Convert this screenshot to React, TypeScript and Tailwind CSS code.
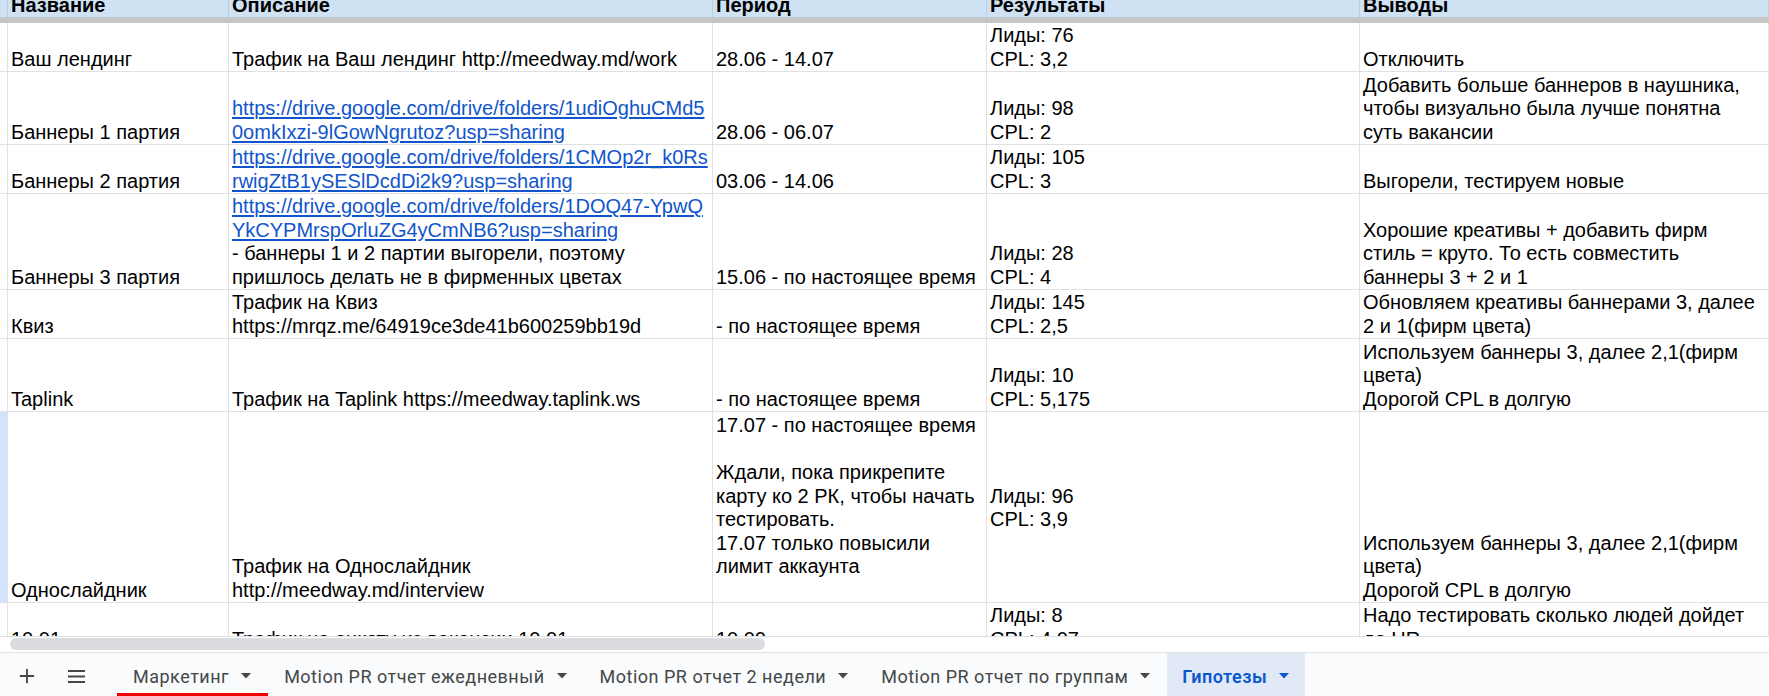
import { Plus } from "lucide-react";

type Line = string | { href: string };

interface RowData {
	h: string;
	mark?: boolean;
	a: Line[];
	b: Line[];
	c: Line[];
	d: Line[];
	e: Line[];
}

const rows: RowData[] = [
	{
		h: "h-[49px]",
		a: ["Ваш лендинг"],
		b: ["Трафик на Ваш лендинг http://meedway.md/work"],
		c: ["28.06 - 14.07"],
		d: ["Лиды: 76", "CPL: 3,2"],
		e: ["Отключить"],
	},
	{
		h: "h-[73px]",
		a: ["Баннеры 1 партия"],
		b: [
			{ href: "https://drive.google.com/drive/folders/1udiOghuCMd5" },
			{ href: "0omkIxzi-9lGowNgrutoz?usp=sharing" },
		],
		c: ["28.06 - 06.07"],
		d: ["Лиды: 98", "CPL: 2"],
		e: [
			"Добавить больше баннеров в наушника,",
			"чтобы визуально была лучше понятна",
			"суть вакансии",
		],
	},
	{
		h: "h-[49px]",
		a: ["Баннеры 2 партия"],
		b: [
			{ href: "https://drive.google.com/drive/folders/1CMOp2r_k0Rs" },
			{ href: "rwigZtB1ySESlDcdDi2k9?usp=sharing" },
		],
		c: ["03.06 - 14.06"],
		d: ["Лиды: 105", "CPL: 3"],
		e: ["Выгорели, тестируем новые"],
	},
	{
		h: "h-[96px]",
		a: ["Баннеры 3 партия"],
		b: [
			{ href: "https://drive.google.com/drive/folders/1DOQ47-YpwQ" },
			{ href: "YkCYPMrspOrluZG4yCmNB6?usp=sharing" },
			"- баннеры 1 и 2 партии выгорели, поэтому",
			"пришлось делать не в фирменных цветах",
		],
		c: ["15.06 - по настоящее время"],
		d: ["Лиды: 28", "CPL: 4"],
		e: [
			"Хорошие креативы + добавить фирм",
			"стиль = круто. То есть совместить",
			"баннеры 3 + 2 и 1",
		],
	},
	{
		h: "h-[49px]",
		a: ["Квиз"],
		b: ["Трафик на Квиз", "https://mrqz.me/64919ce3de41b600259bb19d"],
		c: ["- по настоящее время"],
		d: ["Лиды: 145", "CPL: 2,5"],
		e: ["Обновляем креативы баннерами 3, далее", "2 и 1(фирм цвета)"],
	},
	{
		h: "h-[73px]",
		a: ["Taplink"],
		b: ["Трафик на Taplink https://meedway.taplink.ws"],
		c: ["- по настоящее время"],
		d: ["Лиды: 10", "CPL: 5,175"],
		e: [
			"Используем баннеры 3, далее 2,1(фирм",
			"цвета)",
			"Дорогой CPL в долгую",
		],
	},
	{
		h: "h-[191px]",
		mark: true,
		a: ["Однослайдник"],
		b: ["Трафик на Однослайдник", "http://meedway.md/interview"],
		c: [
			"17.07 - по настоящее время",
			"",
			"Ждали, пока прикрепите",
			"карту ко 2 РК, чтобы начать",
			"тестировать.",
			"17.07 только повысили",
			"лимит аккаунта",
			"",
		],
		d: ["Лиды: 96", "CPL: 3,9", "", "", ""],
		e: [
			"Используем баннеры 3, далее 2,1(фирм",
			"цвета)",
			"Дорогой CPL в долгую",
		],
	},
	{
		h: "h-[49px]",
		a: ["10.01"],
		b: ["Трафик на анкету из вакансии 10.01"],
		c: ["10.09"],
		d: ["Лиды: 8", "CPL: 4,07"],
		e: ["Надо тестировать сколько людей дойдет", "до HR"],
	},
];

const Cell = ({ lines, className }: { lines: Line[]; className: string }) => (
	<div
		className={`${className} flex flex-col justify-end overflow-hidden border-r border-[#e1e1e1] px-[3px]`}
	>
		{lines.map((line, i) =>
			typeof line === "string" ? (
				<div key={i} className="h-[23.5px] whitespace-nowrap">
					{line}
				</div>
			) : (
				<div
					key={i}
					className="h-[23.5px] whitespace-nowrap text-[#1155cc] underline underline-offset-2"
				>
					{line.href}
				</div>
			),
		)}
	</div>
);

const Caret = ({ color }: { color: string }) => (
	<svg width="10" height="6" viewBox="0 0 10 6" className={color}>
		<path d="M0 0h10L5 5.5z" fill="currentColor" />
	</svg>
);

const tabs = [
	"Маркетинг",
	"Motion PR отчет ежедневный",
	"Motion PR отчет 2 недели",
	"Motion PR отчет по группам",
	"Гипотезы",
];

export default function App() {
	return (
		<div className="w-[1769px] h-[696px] overflow-hidden bg-white flex flex-col">
			{/* grid */}
			<div className="h-[637px] border-b border-[#e1e1e1] overflow-hidden flex flex-col font-['Liberation_Sans',Arial,sans-serif] text-[20px] leading-[23.5px] text-black">
				<div className="h-[17px] flex bg-[#cfe2f3] font-bold overflow-hidden shrink-0">
					<div className="w-[8px] border-r border-[#b9cde0]" />
					{[
						["w-[221px]", "Название"],
						["w-[484px]", "Описание"],
						["w-[274px]", "Период"],
						["w-[373px]", "Результаты"],
						["flex-1", "Выводы"],
					].map(([w, t]) => (
						<div
							key={t}
							className={`${w} flex flex-col justify-end border-r border-[#b9cde0] px-[3px]`}
						>
							<div className="h-[23.5px] shrink-0 whitespace-nowrap">{t}</div>
						</div>
					))}
				</div>
				<div className="h-[6px] bg-[#c6c6c6] shrink-0" />
				{rows.map((r, i) => (
					<div key={i} className={`${r.h} shrink-0 flex border-b border-[#e1e1e1]`}>
						<div
							className={`w-[8px] border-r border-[#e1e1e1] ${r.mark ? "bg-[#d3e3fd]" : ""}`}
						/>
						<Cell lines={r.a} className="w-[221px]" />
						<Cell lines={r.b} className="w-[484px]" />
						<Cell lines={r.c} className="w-[274px]" />
						<Cell lines={r.d} className="w-[373px]" />
						<Cell lines={r.e} className="flex-1" />
					</div>
				))}
			</div>

			{/* horizontal scrollbar */}
			<div className="h-[15px] pt-[1px] pl-[10px]">
				<div className="w-[755px] h-[12px] rounded-full bg-[#dadce0]" />
			</div>

			{/* sheet tabs */}
			<div className="h-[44px] border-t border-[#e1e3e1] bg-[#f9fbfd] flex items-stretch pl-[4px] font-['Roboto',sans-serif] text-[18px] text-[#444746]">
				<div className="w-[46px] flex items-center justify-center pt-[3px]">
					<Plus size={22} strokeWidth={2} />
				</div>
				<div className="w-[52px] flex items-center justify-center pt-[3px]">
					<svg width="17" height="13" viewBox="0 0 17 13">
						<path d="M0 1h17M0 6.5h17M0 12h17" stroke="currentColor" strokeWidth="2" />
					</svg>
				</div>
				<div className="flex items-stretch ml-[15px]">
					{tabs.map((t, i) => {
						const active = i === tabs.length - 1;
						return (
							<div
								key={t}
								className={`relative flex items-center gap-[12px] pt-[3px] tracking-[0.5px] ${
									active
										? "bg-[#e1e9f7] text-[#0b57d0] font-semibold pl-[15px] pr-[16px]"
										: "font-normal pl-4 pr-[17px]"
								}`}
							>
								<span className="whitespace-nowrap">{t}</span>
								<Caret color={active ? "text-[#0b57d0]" : "text-[#444746]"} />
								{i === 0 && (
									<div className="absolute left-0 right-0 bottom-0 h-[3px] bg-[#f20000]" />
								)}
							</div>
						);
					})}
				</div>
			</div>
		</div>
	);
}
